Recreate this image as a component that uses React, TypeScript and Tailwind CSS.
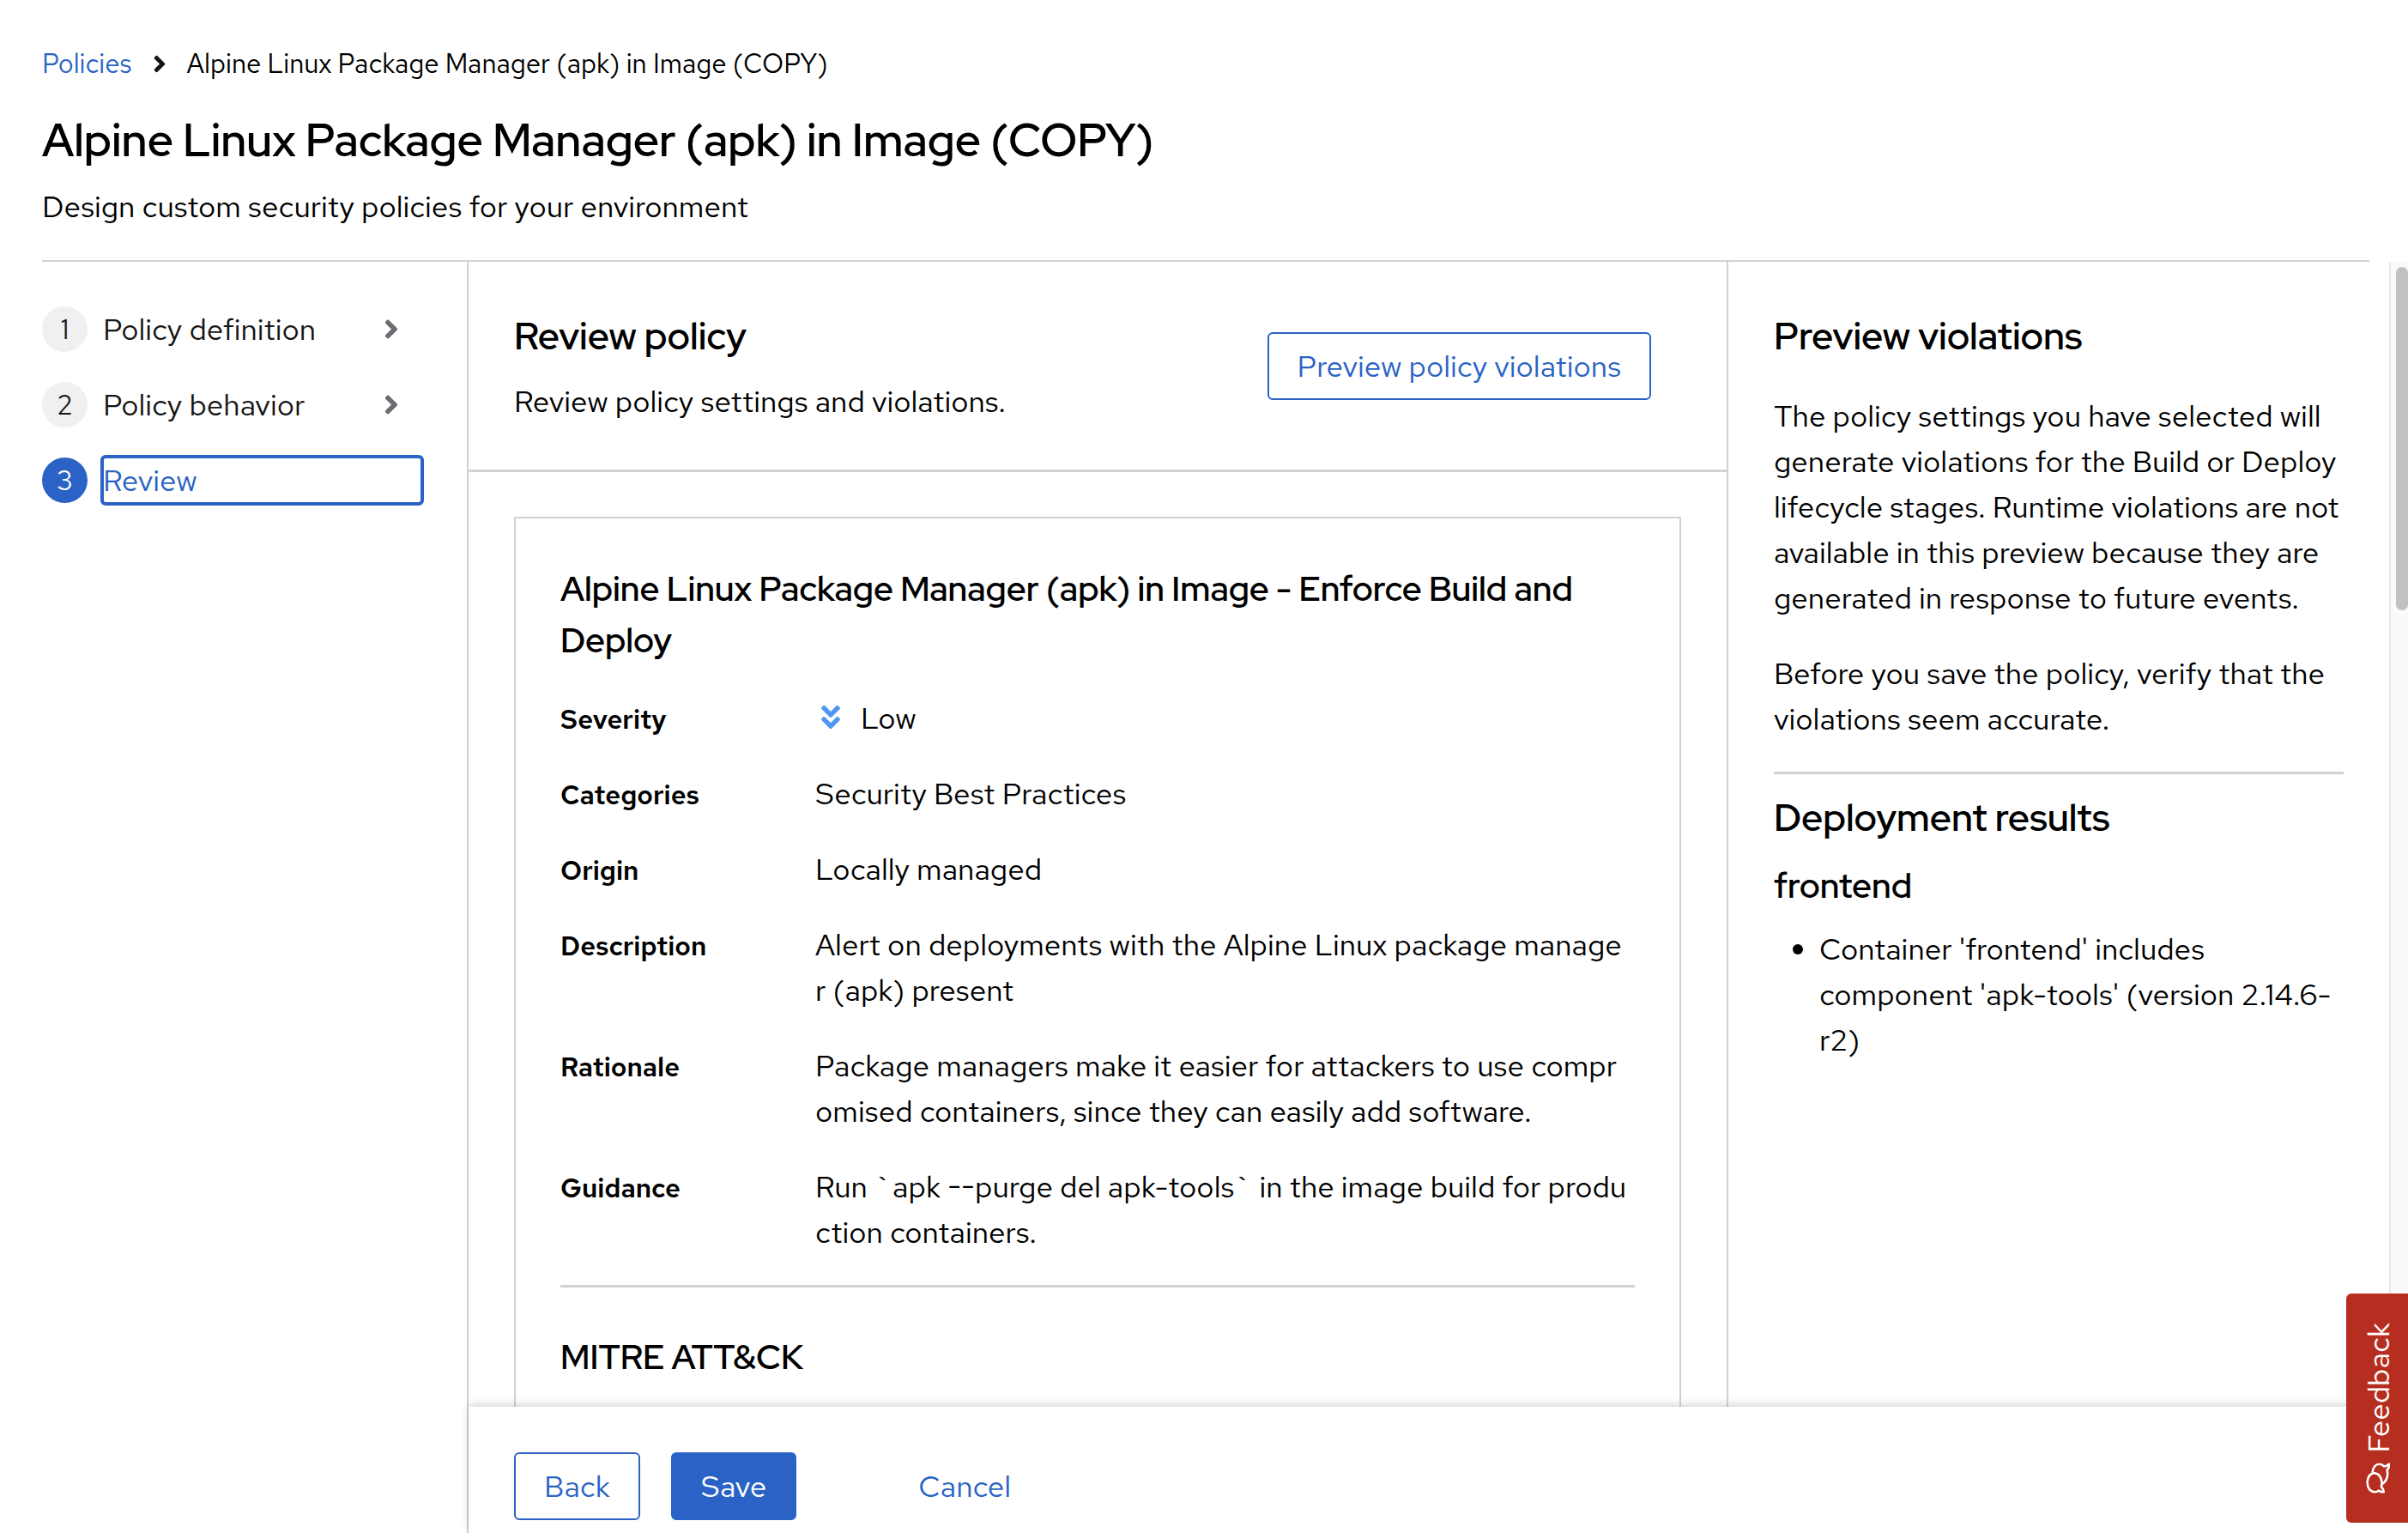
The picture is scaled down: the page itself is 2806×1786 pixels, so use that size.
import type { ReactNode } from "react";
import { FaAngleDoubleDown, FaAngleRight } from "react-icons/fa";

const display = "font-['Red_Hat_Display','Red_Hat_Text',Inter,sans-serif] font-semibold";

const steps = [
  { label: "Policy definition", current: false },
  { label: "Policy behavior", current: false },
  { label: "Review", current: true },
];

const details: { term: string; value: ReactNode }[] = [
  {
    term: "Severity",
    value: (
      <>
        <FaAngleDoubleDown className="mr-6 ml-[7px] inline h-[35px] w-[22px] align-[-4px] text-[#4f97ee]" aria-hidden />
        Low
      </>
    ),
  },
  { term: "Categories", value: "Security Best Practices" },
  { term: "Origin", value: "Locally managed" },
  { term: "Description", value: "Alert on deployments with the Alpine Linux package manager (apk) present" },
  {
    term: "Rationale",
    value: "Package managers make it easier for attackers to use compromised containers, since they can easily add software.",
  },
  { term: "Guidance", value: "Run `apk --purge del apk-tools` in the image build for production containers." },
];

function Button({ variant, children }: { variant: "primary" | "secondary" | "link"; children: ReactNode }) {
  const look = {
    primary: "border-[#2a63c5] bg-[#2a63c5] text-white",
    secondary: "border-[#2a63c5] text-[#2a63c5]",
    link: "border-transparent text-[#2a63c5]",
  }[variant];
  return (
    <button type="button" className={`h-[79px] shrink-0 rounded-[6px] border-2 px-[33px] whitespace-nowrap ${look}`}>
      {children}
    </button>
  );
}

function PageHeader() {
  return (
    <header className="mr-[45px] ml-[49px] border-b-2 border-[#d2d2d2] pt-[50px] pb-9">
      <nav aria-label="Breadcrumb">
        <ol className="flex items-center text-[31px] leading-[48px]">
          <li>
            <a href="#policies" className="text-[#2a63c5]">
              Policies
            </a>
          </li>
          <li className="flex items-center">
            <FaAngleRight className="mx-6 h-[31px] w-4 text-[#151515]" aria-hidden />
            Alpine Linux Package Manager (apk) in Image (COPY)
          </li>
        </ol>
      </nav>
      <h1 className={`mt-8 text-[53px] leading-[66px] ${display}`}>Alpine Linux Package Manager (apk) in Image (COPY)</h1>
      <p className="mt-[18px]">Design custom security policies for your environment</p>
    </header>
  );
}

function StepNav() {
  return (
    <nav aria-label="Wizard steps" className="w-[546px] shrink-0 border-r-2 border-[#d2d2d2] pt-[52px] pr-[53px] pl-[49px]">
      <ol className="flex flex-col gap-[35px]">
        {steps.map(({ label, current }, i) => (
          <li key={label} className="flex items-center gap-[18px]">
            <span
              className={`flex size-[53px] shrink-0 items-center justify-center rounded-full text-[31px] ${
                current ? "bg-[#2a63c5] text-white" : "bg-[#f0f0f0] text-[#151515]"
              }`}
            >
              {i + 1}
            </span>
            <button
              type="button"
              aria-current={current ? "step" : undefined}
              className={`flex h-[53px] flex-1 items-center justify-between text-left ${
                current ? "rounded-[3px] text-[#2a63c5] outline-[4px] -outline-offset-1 outline-[#2a63c5]" : "text-[#151515]"
              }`}
            >
              {label}
              {!current && <FaAngleRight className="mr-[26px] h-[35px] w-[18px] text-[#6a6e73]" aria-hidden />}
            </button>
          </li>
        ))}
      </ol>
    </nav>
  );
}

function ReviewPanel() {
  return (
    <main className="min-w-0 flex-1">
      <div className="flex items-center justify-between border-b-[3px] border-[#d2d2d2] py-[53px] pr-[88px] pl-[53px]">
        <div>
          <h2 className={`text-[44px] leading-[67px] ${display}`}>Review policy</h2>
          <p className="mt-4">Review policy settings and violations.</p>
        </div>
        <Button variant="secondary">Preview policy violations</Button>
      </div>
      <section className="mx-[53px] mt-[52px] border-2 border-[#d2d2d2] p-[52px] pb-40">
        <h3 className={`text-[40px] leading-[60px] ${display}`}>
          Alpine Linux Package Manager (apk) in Image - Enforce Build and Deploy
        </h3>
        <dl className="mt-[34px] flex flex-col gap-[35px]">
          {details.map(({ term, value }) => (
            <div key={term} className="flex items-baseline">
              <dt className="w-[297px] shrink-0 text-[31px] leading-10 font-semibold">{term}</dt>
              <dd className="min-w-0 flex-1 pr-1.5 break-all">{value}</dd>
            </div>
          ))}
        </dl>
        <hr className="mt-[35px] border-t-[3px] border-[#d2d2d2]" />
        <h3 className={`mt-[51px] text-[40px] leading-[60px] ${display}`}>MITRE ATT&amp;CK</h3>
      </section>
    </main>
  );
}

function ViolationsPanel() {
  return (
    <aside className="w-[772px] shrink-0 border-l-2 border-[#d2d2d2] px-[53px] pt-[53px]">
      <h2 className={`text-[44px] leading-[67px] ${display}`}>Preview violations</h2>
      <p className="mt-[33px]">
        The policy settings you have selected will generate violations for the Build or Deploy lifecycle stages. Runtime
        violations are not available in this preview because they are generated in response to future events.
      </p>
      <p className="mt-[35px]">Before you save the policy, verify that the violations seem accurate.</p>
      <hr className="mt-[35px] border-t-[3px] border-[#d2d2d2]" />
      <h2 className={`mt-[17px] text-[44px] leading-[67px] ${display}`}>Deployment results</h2>
      <h3 className={`mt-4 text-[40px] leading-[60px] ${display}`}>frontend</h3>
      <ul className="mt-[17px] list-disc pl-[53px]">
        <li>Container 'frontend' includes component 'apk-tools' (version 2.14.6-r2)</li>
      </ul>
    </aside>
  );
}

function CommentsIcon() {
  return (
    <svg viewBox="0 0 28 36" className="h-9 w-7" fill="none" stroke="currentColor" strokeWidth="2.6" strokeLinejoin="round" aria-hidden>
      <path d="M9.8 12.2C5 12.2 1.6 17 1.6 23C1.6 29.4 5.2 34.3 10.2 34.3C12 34.3 13.6 33.7 14.8 32.6C16.6 33.8 18.4 34.4 20.8 34.2C20.6 31.6 19.6 29.8 17.8 28C18.4 26.4 18.7 24.8 18.5 23C18.2 17 14.6 12.2 9.8 12.2Z" />
      <path d="M7.6 11.6C8.2 5.6 11.4 1.8 15.6 1.8C17.8 1.8 19.6 2.8 21 4.4C23 4.2 25 3.4 27 1.6C27.2 4.6 26.4 6.8 24.6 8.8C26.4 15.6 23.8 22.6 18.4 25.2" />
    </svg>
  );
}

export default function App() {
  return (
    <div className="relative flex h-screen flex-col overflow-hidden bg-white font-['Red_Hat_Text',Inter,sans-serif] text-[35px] leading-[53px] text-black">
      <PageHeader />
      <div className="flex min-h-0 flex-1">
        <StepNav />
        <div className="flex min-w-0 flex-1 flex-col">
          <div className="flex min-h-0 flex-1 overflow-hidden">
            <ReviewPanel />
            <ViolationsPanel />
            <div className="w-[22px] shrink-0 border-l-2 border-[#e8e8e8] bg-[#fafafa] pt-1.5 pl-1.5" aria-hidden>
              <div className="h-[400px] rounded-full bg-[#c1c1c1]" />
            </div>
          </div>
          <footer className="relative flex shrink-0 bg-white px-[53px] pt-[53px] pb-[15px] shadow-[0_-3px_9px_rgba(0,0,0,0.16)]">
            <div className="flex gap-9">
              <Button variant="secondary">Back</Button>
              <Button variant="primary">Save</Button>
            </div>
            <div className="ml-[107px]">
              <Button variant="link">Cancel</Button>
            </div>
          </footer>
        </div>
      </div>
      <button
        type="button"
        className="absolute right-0 bottom-3 flex h-[267px] w-[72px] flex-col items-center justify-center gap-3 rounded-l-[6px] bg-[#b62e20] pl-0.5 text-white"
      >
        <span className="rotate-180 [writing-mode:vertical-rl]">Feedback</span>
        <CommentsIcon />
      </button>
    </div>
  );
}
